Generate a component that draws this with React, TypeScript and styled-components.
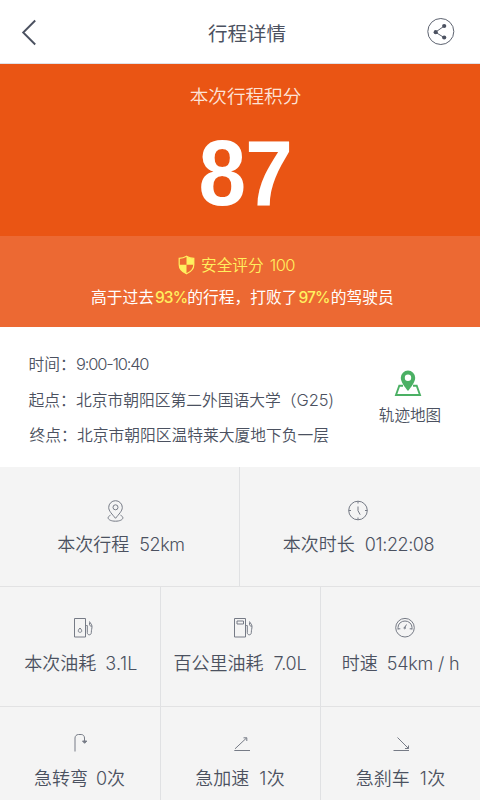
import React from "react";
import styled, { createGlobalStyle } from "styled-components";

const Global = createGlobalStyle`
  * { box-sizing: border-box; }
  body { margin: 0; background: #fff; }
`;

const cjk = `"Noto Sans CJK SC", sans-serif`;
const latin = `Inter, "Noto Sans CJK SC", sans-serif`;

const Page = styled.main`
  width: 480px;
  height: 800px;
  overflow: hidden;
  display: flex;
  flex-direction: column;
  background: #fff;
  color: #4b5160;
  font-family: ${cjk};
  font-weight: 350;
  white-space: nowrap;
`;

const Header = styled.header`
  flex: none;
  height: 64px;
  padding: 0 25px 0 21px;
  display: flex;
  align-items: center;
  justify-content: space-between;
  border-bottom: 1px solid #dfe1e8;
`;

const IconButton = styled.button`
  width: 28px;
  height: 28px;
  padding: 0;
  border: 0;
  background: none;
  color: #4b5160;
  svg { display: block; }
`;

const Title = styled.h1`
  margin: 2px 0 0 18px;
  font-size: 19.5px;
  line-height: 28px;
  font-weight: 400;
`;

const Hero = styled.section`
  flex: none;
  height: 172px;
  padding: 17px 0 0 11px;
  display: flex;
  flex-direction: column;
  align-items: center;
  background: #ea5514;
`;

const HeroLabel = styled.div`
  color: #fde3d8;
  font-size: 18.6px;
  line-height: 28px;
`;

const Score = styled.div`
  margin-top: 12px;
  color: #fff;
  font: bold 92px/104px "Liberation Sans", Arial, sans-serif;
  letter-spacing: -1px;
  transform: scaleX(0.93);
`;

const Band = styled.section`
  flex: none;
  height: 91px;
  padding: 17px 0 0;
  background: #ec6933;
  color: #fff;
`;

const Safety = styled.div`
  height: 24px;
  padding-left: 178px;
  display: flex;
  align-items: center;
  gap: 6px;
  color: #fff05f;
  font-size: 15.7px;
  line-height: 24px;
`;

const Compare = styled.p`
  margin: 8px 0 0;
  padding-left: 91px;
  font-size: 15.75px;
  line-height: 24px;
  font-weight: 400;
`;

const Percent = styled.b`
  display: inline-block;
  width: 33.3px;
  padding-left: 1px;
  color: #fff05f;
  font-family: ${latin};
  font-weight: 500;
  font-size: 15.5px;
  letter-spacing: -0.9px;
`;

const Num = styled.span<{ $gap?: number; $track?: number; $size?: number }>`
  margin-left: ${(p) => p.$gap ?? 0}px;
  font-family: ${latin};
  font-weight: 300;
  font-size: ${(p) => (p.$size ? `${p.$size}px` : "inherit")};
  letter-spacing: ${(p) => p.$track ?? 0}px;
`;

const Trip = styled.section`
  flex: none;
  height: 140px;
  padding-left: 28px;
  display: flex;
`;

const Facts = styled.dl`
  margin: 0;
  padding-top: 19px;
  width: 340px;
  display: flex;
  flex-direction: column;
`;

const Fact = styled.div<{ $indent?: number }>`
  display: flex;
  height: 35.5px;
  padding-left: ${(p) => p.$indent ?? 0}px;
  font-size: 15.75px;
  line-height: 35.5px;
`;

const Term = styled.dt`
  width: 47.5px;
`;

const Value = styled.dd`
  margin: 0;
`;

const MapLink = styled.a`
  padding-top: 42px;
  width: 84px;
  display: flex;
  flex-direction: column;
  align-items: center;
  font-size: 15.6px;
  line-height: 24px;
  svg { display: block; margin: 0 4px 4px 0; }
`;

const StatRow = styled.section<{ $height: number }>`
  flex: none;
  display: flex;
  height: ${(p) => p.$height}px;
  background: #f4f4f4;
  border-bottom: 1.5px solid #e2e2e3;
`;

const Stat = styled.div<{ $width: number; $top: number }>`
  flex: none;
  width: ${(p) => p.$width}px;
  padding-top: ${(p) => p.$top}px;
  display: flex;
  flex-direction: column;
  align-items: center;
  border-right: 1px solid #e0e1e3;
  &:last-child { border-right: 0; }
`;

const StatIcon = styled.svg<{ $shift?: number }>`
  flex: none;
  width: 24px;
  height: 24px;
  margin-left: ${(p) => (p.$shift ?? 0) * 2}px;
  fill: none;
  stroke: #767b86;
  stroke-width: 1;
`;

const StatText = styled.div<{ $shift?: number; $drop?: number }>`
  margin: ${(p) => p.$drop ?? 8}px 0 0 ${(p) => (p.$shift ?? 0) * 2}px;
  font-size: 18px;
  line-height: 28px;
`;

const PumpHose = () => (
  <path d="M15.200 9.500h1.100v7.200c0 2.800 4 2.800 4 0 0-3 .7-4 .7-6.200 0-1.800-1.500-3-2.500-5M18.500 6.500v2.200c0 1 1.200 1.500 2.500 1.500" />
);

export default function App() {
  return (
    <Page>
      <Global />
      <Header>
        <IconButton aria-label="返回">
          <svg width="28" height="28" fill="none" stroke="currentColor" strokeWidth="1.9">
            <path d="M14.200 2.500 2.200 14.500l12 12" />
          </svg>
        </IconButton>
        <Title>行程详情</Title>
        <IconButton aria-label="分享">
          <svg width="28" height="28" fill="none" stroke="currentColor">
            <circle cx="13.800" cy="13.500" r="13" strokeWidth=".9" />
            <path d="m17 8.200-8.500 6L17 19.500" strokeWidth=".9" />
            <g fill="currentColor" stroke="none">
              <circle cx="17.200" cy="8" r="2.100" />
              <circle cx="8.700" cy="14.200" r="2.100" />
              <circle cx="17.200" cy="19.500" r="2.100" />
            </g>
          </svg>
        </IconButton>
      </Header>

      <Hero>
        <HeroLabel>本次行程积分</HeroLabel>
        <Score>87</Score>
      </Hero>

      <Band>
        <Safety>
          <svg width="17" height="20" viewBox="0 0 17 20">
            <path d="M8.500 1.200c2.300 1.400 4.500 2 7.300 2.200v6.400c0 4.200-3.300 7.200-7.300 9-4-1.800-7.300-4.800-7.300-9V3.400c2.800-.2 5-.8 7.300-2.200Z" fill="none" stroke="currentColor" strokeWidth="1.200" />
            <path d="M8.500 1.200c2.300 1.400 4.500 2 7.300 2.200v6.400H8.500v9c-4-1.800-7.300-4.800-7.300-9h7.300Z" fill="currentColor" />
          </svg>
          <div>安全评分<Num $gap={6} $size={16.5} $track={-0.6}>100</Num></div>
        </Safety>
        <Compare>
          高于过去<Percent>93%</Percent>的行程，打败了<Percent>97%</Percent>的驾驶员
        </Compare>
      </Band>

      <Trip>
        <Facts>
          <Fact $indent={0.5}>
            <Term>时间：</Term>
            <Value><Num $size={16.5} $track={-1.2}>9:00-10:40</Num></Value>
          </Fact>
          <Fact $indent={0.5}>
            <Term>起点：</Term>
            <Value>北京市朝阳区第二外国语大学（<Num $size={16.5} $track={-0.1}>G25</Num>)</Value>
          </Fact>
          <Fact $indent={1.5}>
            <Term>终点：</Term>
            <Value>北京市朝阳区温特莱大厦地下负一层</Value>
          </Fact>
        </Facts>
        <MapLink>
          <svg width="28" height="29" fill="none">
            <path d="M9 16.800H5.300L2 26h24l-3.300-9.200H19" stroke="#4bb064" strokeWidth="1.900" />
            <path fillRule="evenodd" d="M14 1.600a7.200 7.200 0 0 0-7.200 7.200c0 4.300 4 9.200 7.200 13.200 3.200-4 7.200-8.900 7.200-13.200A7.200 7.200 0 0 0 14 1.600Zm0 4a3.200 3.200 0 1 1 0 6.400 3.200 3.200 0 0 1 0-6.400Z" fill="#4bb064" />
          </svg>
          轨迹地图
        </MapLink>
      </Trip>

      <StatRow $height={120}>
        <Stat $width={240} $top={32}>
          <StatIcon $shift={-3.5}>
            <path d="M11.500 19.300C8.200 15.200 4.700 12 4.700 8.500a6.800 6.800 0 0 1 13.600 0c0 3.500-3.500 6.700-6.800 10.800Z" />
            <circle cx="11.500" cy="8.300" r="2.500" />
            <path d="M6.500 16.200c-5 2.500-1.500 6 5 6s10-3.500 5-6" />
          </StatIcon>
          <StatText $shift={1.5} $drop={6}>本次行程<Num $gap={10} $track={-0.4}>52km</Num></StatText>
        </Stat>
        <Stat $width={240} $top={32}>
          <StatIcon $shift={-2}>
            <circle cx="12" cy="11.500" r="9.300" />
            <path d="M12 2.200v2.300M12 18.500v2.300M2.700 11.500H5M19 11.500h2.300M12 7.500v4.200l2.200 4" />
          </StatIcon>
          <StatText $shift={-1.5} $drop={6}>本次时长<Num $gap={10} $track={-0.4}>01:22:08</Num></StatText>
        </Stat>
      </StatRow>

      <StatRow $height={120}>
        <Stat $width={161} $top={29}>
          <StatIcon $shift={2.5}>
            <path d="M3.500 2.500h11v18.500h-11z" />
            <path d="M9 12c-3 3.200-1.500 4.300 0 4.300s3-1.100 0-4.300Z" />
            <PumpHose />
          </StatIcon>
          <StatText $shift={1}>本次油耗<Num $gap={9} $track={0.3}>3.1L</Num></StatText>
        </Stat>
        <Stat $width={160} $top={29}>
          <StatIcon $shift={2}>
            <path d="M3.500 2.500h11v18.500h-11zM6 5h6.500v3H6z" />
            <PumpHose />
          </StatIcon>
          <StatText $shift={-0.5}>百公里油耗<Num $gap={10} $track={-0.2}>7.0L</Num></StatText>
        </Stat>
        <Stat $width={159} $top={29}>
          <StatIcon $shift={4}>
            <circle cx="12" cy="11.700" r="9.300" />
            <path d="M5 13.500v-2a7 6.500 0 0 1 14 0v2M5 12.800h2.300M16.700 12.800H19M11.500 12l2-3.500" />
            <circle cx="11.700" cy="12" r=".8" />
          </StatIcon>
          <StatText>时速<Num $gap={9} $track={-0.2}>54km / h</Num></StatText>
        </Stat>
      </StatRow>

      <StatRow $height={120}>
        <Stat $width={161} $top={24}>
          <StatIcon>
            <path d="M7 20.500V7c0-2 1.500-3.500 3.500-3.500h2.700c2 0 3.300 1.500 3.300 3.500v4" />
            <path d="M14.500 10h4.300l-2.200 2.300Z" fill="#767b86" />
          </StatIcon>
          <StatText $shift={-0.5}>急转弯<Num $gap={8}>0</Num>次</StatText>
        </Stat>
        <Stat $width={160} $top={24}>
          <StatIcon $shift={1.5}>
            <path d="M4.300 19.500h15.700M5 17.800 16.500 7M13.500 6.800h3.300V10" />
          </StatIcon>
          <StatText $shift={-0.5}>急加速<Num $gap={10} $track={0.5}>1</Num>次</StatText>
        </Stat>
        <Stat $width={159} $top={24}>
          <StatIcon>
            <path d="M4.500 19.500h15.500M8.500 6.500l11 11M19.500 14.500v3H16" />
          </StatIcon>
          <StatText>急刹车<Num $gap={10} $track={0.5}>1</Num>次</StatText>
        </Stat>
      </StatRow>
    </Page>
  );
}
